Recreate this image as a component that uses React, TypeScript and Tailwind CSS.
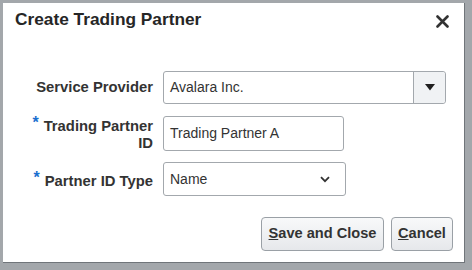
export default function App() {
  return (
    <div
      className="w-[472px] h-[270px] bg-[#a3a7ab] pt-[3px] pl-[3px] overflow-hidden"
      style={{ fontFamily: '"Liberation Sans", Arial, sans-serif' }}
    >
      <div className="w-[462px] h-[260px] bg-white border-r border-b border-[#70757a] flex flex-col">
        {/* header */}
        <div className="flex items-start justify-between pl-[12px] pr-[15px] pt-[6px]">
          <h1 className="text-[17.3px] leading-[20px] font-bold text-[#262626]">Create Trading Partner</h1>
          <button className="mt-[6px] text-[#333]" aria-label="Close">
            <svg width="13" height="13" viewBox="0 0 13 13">
              <path d="M1.5 1.5 L11.5 11.5 M11.5 1.5 L1.5 11.5" stroke="currentColor" strokeWidth="2.6" strokeLinecap="round" />
            </svg>
          </button>
        </div>

        {/* form */}
        <div className="flex flex-col mt-[42px] pl-[27px] text-[14.8px] text-[#333]">
          <div className="flex items-center gap-[10px]">
            <label className="w-[123px] text-right font-bold leading-[17px] whitespace-nowrap">Service Provider</label>
            <div className="flex h-[33px] w-[283px] border border-[#a3a8ad] rounded-[3px]">
              <div className="flex-1 flex items-center pl-[6px] text-[14px] text-[#333]">Avalara Inc.</div>
              <div className="w-[32px] flex items-center justify-center border-l border-[#a3a8ad] bg-[#f0f2f4] rounded-r-[3px]">
                <svg width="10" height="7" viewBox="0 0 10 7">
                  <path d="M0 0 H10 L5 6.5 Z" fill="#1f1f1f" />
                </svg>
              </div>
            </div>
          </div>

          <div className="flex items-center gap-[10px] mt-[10px]">
            <label className="w-[123px] text-right font-bold leading-[17px]">
              <span className="text-[#1a6fcf] text-[16px] align-[3px] mr-[5px]">*</span>
              Trading Partner
              <br />
              ID
            </label>
            <div className="flex items-center h-[35px] w-[181px] border border-[#a3a8ad] rounded-[3px] pl-[6px] text-[14px]">
              Trading Partner A
            </div>
          </div>

          <div className="flex items-center gap-[10px] mt-[10px]">
            <label className="w-[123px] text-right font-bold leading-[17px] whitespace-nowrap">
              <span className="text-[#1a6fcf] text-[16px] align-[3px] mr-[5px]">*</span>
              Partner ID Type
            </label>
            <div className="flex items-center justify-between h-[34px] w-[183px] border border-[#a3a8ad] rounded-[3px] pl-[6px] pr-[15px] text-[14px]">
              <span>Name</span>
              <svg width="10" height="7" viewBox="0 0 10 7">
                <path d="M1 1.2 L5 5.2 L9 1.2" stroke="#333" strokeWidth="1.8" fill="none" />
              </svg>
            </div>
          </div>
        </div>

        {/* footer */}
        <div className="flex justify-end gap-[7px] mt-auto mb-[11px] pr-[11px]">
          <button className="h-[34px] w-[123px] rounded-[4px] border border-[#9aa0a6] bg-gradient-to-b from-[#f8f9fa] to-[#e6e8eb] text-[14.6px] font-bold text-[#333]">
            <span className="underline">S</span>ave and Close
          </button>
          <button className="h-[34px] w-[62px] rounded-[4px] border border-[#9aa0a6] bg-gradient-to-b from-[#f8f9fa] to-[#e6e8eb] text-[14.6px] font-bold text-[#333]">
            <span className="underline">C</span>ancel
          </button>
        </div>
      </div>
    </div>
  );
}
